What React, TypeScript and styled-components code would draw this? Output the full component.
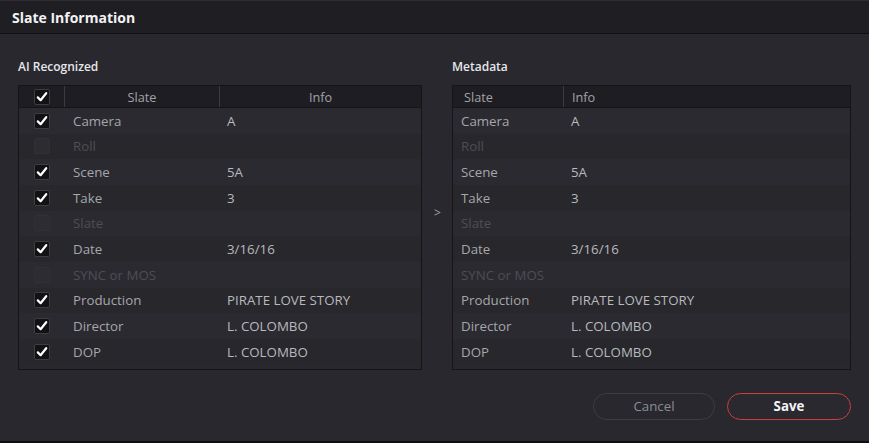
import styled, { createGlobalStyle } from "styled-components";

const GlobalStyle = createGlobalStyle`
  html, body {
    margin: 0;
    padding: 0;
    background: #28282e;
  }
  body {
    font-family: "Open Sans", "Noto Sans", "Liberation Sans", sans-serif;
  }
`;

type Row = { slate: string; info: string; on: boolean };

const rows: Row[] = [
  { slate: "Camera", info: "A", on: true },
  { slate: "Roll", info: "", on: false },
  { slate: "Scene", info: "5A", on: true },
  { slate: "Take", info: "3", on: true },
  { slate: "Slate", info: "", on: false },
  { slate: "Date", info: "3/16/16", on: true },
  { slate: "SYNC or MOS", info: "", on: false },
  { slate: "Production", info: "PIRATE LOVE STORY", on: true },
  { slate: "Director", info: "L. COLOMBO", on: true },
  { slate: "DOP", info: "L. COLOMBO", on: true },
];

const Dialog = styled.div`
  width: 869px;
  height: 443px;
  box-sizing: border-box;
  background: #28282e;
  border-top: 1px solid #2c2c31;
  border-bottom: 2px solid #0e0e10;
  display: flex;
  flex-direction: column;
`;

const TitleBar = styled.div`
  height: 32px;
  flex: none;
  display: flex;
  align-items: center;
  padding-left: 12px;
  background: #1f1f23;
  border-bottom: 1px solid #111114;
  color: #f2f2f4;
  font-size: 14px;
  font-weight: 700;
`;

const Body = styled.div`
  display: flex;
  padding: 25px 18px 0 18px;
`;

const Panel = styled.div<{ $width: number }>`
  width: ${(p) => p.$width}px;
  display: flex;
  flex-direction: column;
`;

const PanelLabel = styled.div`
  height: 16px;
  margin-bottom: 10px;
  color: #e6e6ea;
  font-size: 12px;
  font-weight: 600;
  line-height: 16px;
`;

const Arrow = styled.div`
  width: 30px;
  padding-top: 145px;
  padding-left: 1px;
  box-sizing: border-box;
  color: #a0a0a6;
  font-size: 12px;
  text-align: center;
`;

const Table = styled.div`
  border: 1px solid #151518;
  background: #28282e;
  padding-bottom: 4px;
`;

const Grid = styled.div<{ $cols: string }>`
  display: grid;
  grid-template-columns: ${(p) => p.$cols};
  align-items: center;
`;

const HeadRow = styled(Grid)`
  height: 21px;
  background: #1e1e22;
  border-bottom: 1px solid #151518;
`;

const HeadCell = styled.div<{ $center?: boolean; $divider?: boolean; $pad?: number }>`
  height: 100%;
  display: flex;
  align-items: center;
  justify-content: ${(p) => (p.$center ? "center" : "flex-start")};
  padding-left: ${(p) => p.$pad ?? 0}px;
  box-sizing: border-box;
  border-left: ${(p) => (p.$divider ? "1px solid #3a3a40" : "none")};
  color: #a2a2a8;
  font-size: 12.7px;
`;

const DataRow = styled(Grid)<{ $alt: boolean }>`
  height: 25.67px;
  background: ${(p) => (p.$alt ? "#27272c" : "#2a2a30")};
`;

const Cell = styled.div<{ $dim?: boolean; $pad: number; $info?: boolean }>`
  padding-left: ${(p) => p.$pad}px;
  color: ${(p) => (p.$dim ? "#4e4e54" : p.$info ? "#b9b9be" : "#a6a6ab")};
  font-size: 13.3px;
  white-space: nowrap;
`;

const CheckCell = styled.div`
  display: flex;
  justify-content: center;
  padding-left: 1px;
`;

const Box = styled.div<{ $on: boolean }>`
  width: 16px;
  height: 16px;
  box-sizing: border-box;
  border-radius: 2px;
  background: ${(p) => (p.$on ? "#121214" : "#2c2c31")};
  border: 1px solid ${(p) => (p.$on ? "#3d3d42" : "#303035")};
  display: flex;
  align-items: center;
  justify-content: center;
`;

const Footer = styled.div`
  display: flex;
  justify-content: flex-end;
  gap: 12px;
  padding: 23px 18px 0 0;
`;

const Button = styled.button<{ $primary?: boolean }>`
  height: 27px;
  width: ${(p) => (p.$primary ? 124 : 122)}px;
  border-radius: 14px;
  background: ${(p) => (p.$primary ? "#29292f" : "#28282e")};
  border: 1px solid ${(p) => (p.$primary ? "#c9413a" : "#3d3d43")};
  color: ${(p) => (p.$primary ? "#f4f4f6" : "#8c8c92")};
  font-family: inherit;
  font-size: 13.3px;
  font-weight: ${(p) => (p.$primary ? 700 : 400)};
  padding: 0;
`;

const Check = ({ on }: { on: boolean }) => (
  <Box $on={on}>
    {on && (
      <svg width="12" height="12" viewBox="0 0 12 12">
        <path
          d="M1.8 6.4 L4.6 9.2 L10.2 2.2"
          fill="none"
          stroke="#ffffff"
          strokeWidth="2.2"
          strokeLinecap="round"
          strokeLinejoin="round"
        />
      </svg>
    )}
  </Box>
);

const LEFT_COLS = "45px 155px 1fr";
const RIGHT_COLS = "110px 1fr";

export default function App() {
  return (
    <>
      <GlobalStyle />
      <Dialog>
        <TitleBar>Slate Information</TitleBar>
        <Body>
          <Panel $width={404}>
            <PanelLabel>AI Recognized</PanelLabel>
            <Table>
              <HeadRow $cols={LEFT_COLS}>
                <CheckCell>
                  <Check on />
                </CheckCell>
                <HeadCell $center $divider>
                  Slate
                </HeadCell>
                <HeadCell $center $divider>
                  Info
                </HeadCell>
              </HeadRow>
              {rows.map((r, i) => (
                <DataRow key={r.slate} $cols={LEFT_COLS} $alt={i % 2 === 1}>
                  <CheckCell>
                    <Check on={r.on} />
                  </CheckCell>
                  <Cell $pad={9} $dim={!r.on}>
                    {r.slate}
                  </Cell>
                  <Cell $pad={8} $info>
                    {r.info}
                  </Cell>
                </DataRow>
              ))}
            </Table>
          </Panel>
          <Arrow>&gt;</Arrow>
          <Panel $width={399}>
            <PanelLabel>Metadata</PanelLabel>
            <Table>
              <HeadRow $cols={RIGHT_COLS}>
                <HeadCell $pad={11}>Slate</HeadCell>
                <HeadCell $divider $pad={8}>
                  Info
                </HeadCell>
              </HeadRow>
              {rows.map((r, i) => (
                <DataRow key={r.slate} $cols={RIGHT_COLS} $alt={i % 2 === 1}>
                  <Cell $pad={8} $dim={!r.on}>
                    {r.slate}
                  </Cell>
                  <Cell $pad={8} $info>
                    {r.info}
                  </Cell>
                </DataRow>
              ))}
            </Table>
          </Panel>
        </Body>
        <Footer>
          <Button>Cancel</Button>
          <Button $primary>Save</Button>
        </Footer>
      </Dialog>
    </>
  );
}
